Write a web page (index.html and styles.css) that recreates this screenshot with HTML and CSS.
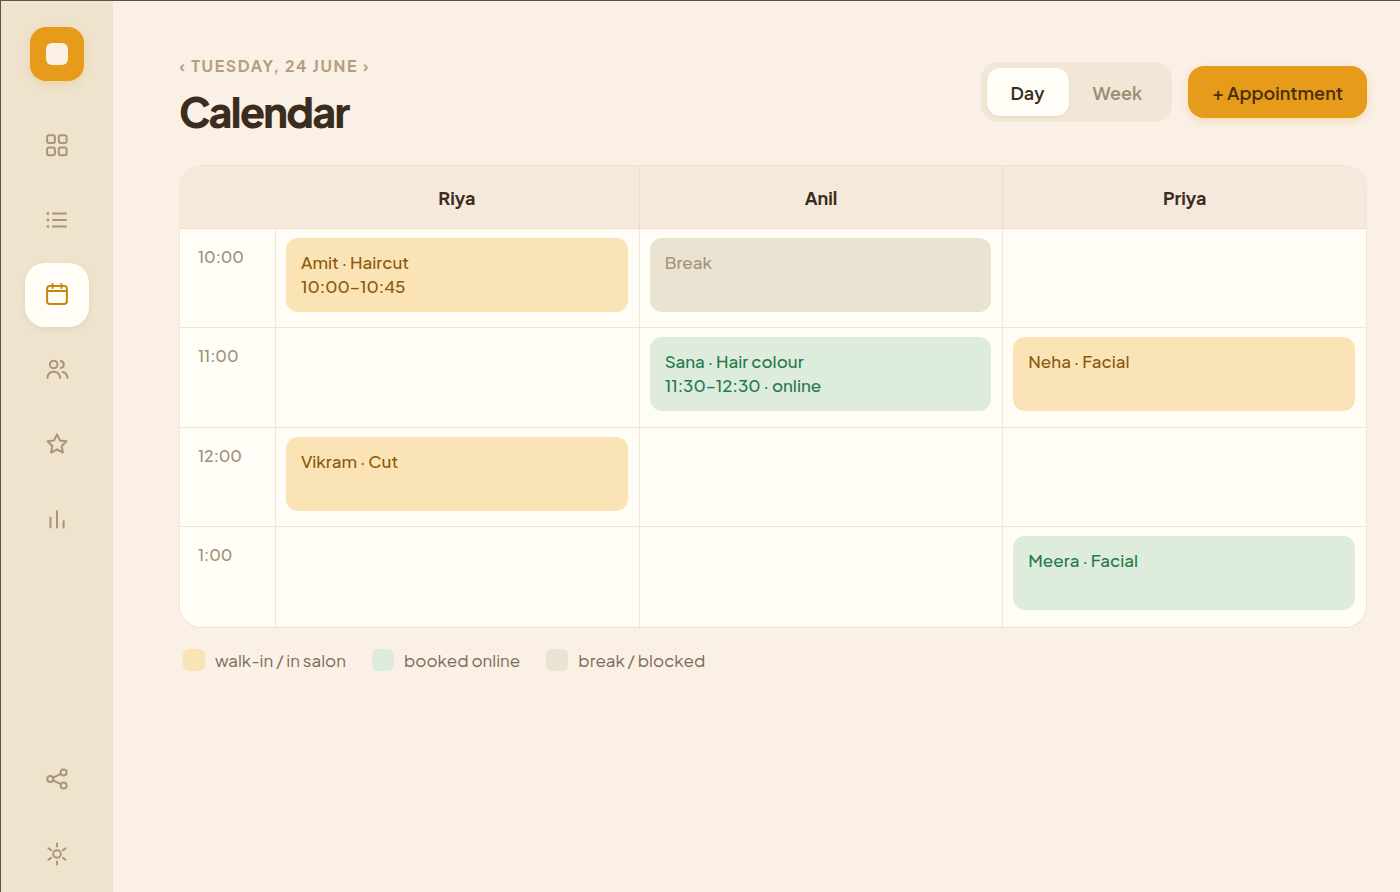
FILE: index.html
```html
<!DOCTYPE html>
<html lang="en">
<head>
<meta charset="utf-8">
<meta name="viewport" content="width=device-width, initial-scale=1">
<title>Calendar</title>
<link rel="stylesheet" href="styles.css">
</head>
<body>
<div class="app">
  <nav class="sidebar" aria-label="Main">
    <a class="logo" href="#" aria-label="Home"><span class="logo-mark"></span></a>
    <a class="nav-item" href="#" aria-label="Dashboard">
      <svg class="icon" viewBox="0 0 26 26"><rect x="3.1" y="3.2" width="7.8" height="7.8" rx="1.9"/><rect x="14.8" y="3.2" width="7.8" height="7.8" rx="1.9"/><rect x="3.1" y="15.4" width="7.8" height="7.8" rx="1.9"/><rect x="14.8" y="15.4" width="7.8" height="7.8" rx="1.9"/></svg>
    </a>
    <a class="nav-item" href="#" aria-label="List">
      <svg class="icon" viewBox="0 0 26 26"><path d="M9 6.5h13M9 13h13M9 19.6h13"/><g class="icon-dots"><circle cx="3.9" cy="6.5" r="1.4"/><circle cx="3.9" cy="13" r="1.4"/><circle cx="3.9" cy="19.6" r="1.4"/></g></svg>
    </a>
    <a class="nav-item nav-item-active" href="#" aria-label="Calendar" aria-current="page">
      <svg class="icon" viewBox="0 0 26 26"><rect x="3.1" y="4" width="19.8" height="18" rx="2.8"/><path d="M3.1 9h19.8M8.6 2.1v3.9M17.4 2.1v3.9"/></svg>
    </a>
    <a class="nav-item" href="#" aria-label="Clients">
      <svg class="icon" viewBox="0 0 26 26"><circle cx="9.7" cy="7.5" r="3.8"/><path d="M3.4 20.8c.3-3.8 2.9-6 6.3-6s6 2.2 6.3 6M16.8 4c1.8.4 3 1.7 3 3.5s-1.2 3.1-3 3.5M18.6 15.1c2.9.5 4.5 2.6 4.9 5.7"/></svg>
    </a>
    <a class="nav-item" href="#" aria-label="Reviews">
      <svg class="icon" viewBox="0 0 26 26"><path d="M13 2.4l2.9 6 6.6.9-4.8 4.7 1.2 6.6L13 17.5l-5.9 3.1 1.2-6.6-4.8-4.7 6.6-.9z"/></svg>
    </a>
    <a class="nav-item" href="#" aria-label="Reports">
      <svg class="icon" viewBox="0 0 26 26"><path d="M6.5 10.8v9.8M13 4.2v16.4M19.6 14.2v6.4"/></svg>
    </a>
    <a class="nav-item nav-item-end" href="#" aria-label="Share">
      <svg class="icon" viewBox="0 0 26 26"><circle cx="6.3" cy="13" r="3"/><circle cx="19.6" cy="6.4" r="3"/><circle cx="19.6" cy="19.6" r="3"/><path d="M9 11.7l7.9-3.9M9 14.3l7.9 3.9"/></svg>
    </a>
    <a class="nav-item" href="#" aria-label="Settings">
      <svg class="icon" viewBox="0 0 26 26"><circle cx="13" cy="13" r="3.8"/><path d="M13 2.6v3M13 20.4v3M4.5 7.4l2.6 1.7M18.9 16.9l2.6 1.7M4.5 18.6l2.6-1.7M18.9 9.1l2.6-1.7"/></svg>
    </a>
  </nav>

  <main class="main">
    <header class="page-header">
      <div>
        <p class="date">‹ Tuesday, 24 June ›</p>
        <h1 class="title">Calendar</h1>
      </div>
      <div class="actions">
        <div class="segmented" role="group" aria-label="View">
          <button class="segment segment-active" type="button" aria-pressed="true">Day</button>
          <button class="segment" type="button" aria-pressed="false">Week</button>
        </div>
        <button class="primary" type="button">+ Appointment</button>
      </div>
    </header>

    <div class="schedule-card">
      <table class="schedule">
        <thead>
          <tr><td class="time-col"></td><th scope="col">Riya</th><th scope="col">Anil</th><th scope="col">Priya</th></tr>
        </thead>
        <tbody>
          <tr>
            <th class="time" scope="row">10:00</th>
            <td><div class="event event-salon">Amit · Haircut<br>10:00–10:45</div></td>
            <td><div class="event event-break">Break</div></td>
            <td></td>
          </tr>
          <tr>
            <th class="time" scope="row">11:00</th>
            <td></td>
            <td><div class="event event-online">Sana · Hair colour<br>11:30–12:30 · online</div></td>
            <td><div class="event event-salon">Neha · Facial</div></td>
          </tr>
          <tr>
            <th class="time" scope="row">12:00</th>
            <td><div class="event event-salon">Vikram · Cut</div></td>
            <td></td>
            <td></td>
          </tr>
          <tr>
            <th class="time" scope="row">1:00</th>
            <td></td>
            <td></td>
            <td><div class="event event-online">Meera · Facial</div></td>
          </tr>
        </tbody>
      </table>
    </div>

    <ul class="legend">
      <li class="legend-item"><span class="swatch event-salon"></span>walk-in / in salon</li>
      <li class="legend-item"><span class="swatch event-online"></span>booked online</li>
      <li class="legend-item"><span class="swatch event-break"></span>break / blocked</li>
    </ul>
  </main>
</div>
</body>
</html>
```
FILE: styles.css
```css
*, *::before, *::after { box-sizing: border-box; }

body {
  margin: 0;
  background: #faf0e6;
  color: #3a2d20;
  font-family: "Plus Jakarta Sans", Inter, "Liberation Sans", sans-serif;
  font-size: 16px;
}

button { font: inherit; border: 0; cursor: pointer; }

.app {
  display: flex;
  min-height: 100vh;
  border-top: 1px solid #5f504b;
  border-left: 1px solid #5f504b;
}

.sidebar {
  display: flex;
  flex-direction: column;
  align-items: center;
  flex: none;
  gap: 11px;
  width: 112px;
  padding: 26px 1px 6px 0;
  background: #efe3cd;
}

.logo {
  display: grid;
  place-items: center;
  width: 54px;
  height: 54px;
  margin-bottom: 21px;
  border-radius: 16px;
  background: #e69b1a;
  box-shadow: 0 3px 8px rgba(230, 155, 26, 0.22);
}

.logo-mark {
  width: 22px;
  height: 22px;
  border-radius: 6px;
  background: #faf0e6;
}

.nav-item {
  display: grid;
  place-items: center;
  width: 64px;
  height: 64px;
  border-radius: 20px;
  color: #a6967a;
}

.nav-item-active {
  background: #fffdf6;
  color: #c6860f;
  box-shadow: 0 2px 6px rgba(90, 70, 30, 0.08);
}

.nav-item-end { margin-top: auto; }

.icon {
  width: 26px;
  height: 26px;
  fill: none;
  stroke: currentColor;
  stroke-width: 2;
  stroke-linecap: round;
  stroke-linejoin: round;
}

.icon-dots { fill: currentColor; stroke: none; }

.main {
  flex: 1;
  min-width: 0;
  padding: 53px 33px 32px 66px;
}

.page-header {
  display: flex;
  align-items: flex-start;
  justify-content: space-between;
  margin-bottom: 26px;
}

.date {
  margin: 0;
  color: #b3a079;
  font-size: 16px;
  font-weight: 700;
  line-height: 24px;
  letter-spacing: 0.1em;
  text-transform: uppercase;
}

.title {
  margin: 6px 0 0;
  font-size: 41px;
  font-weight: 800;
  line-height: 55px;
  letter-spacing: -0.04em;
}

.actions {
  display: flex;
  align-items: center;
  gap: 16px;
  margin-top: 8px;
}

.segmented {
  display: flex;
  padding: 5px;
  border: 1px solid #f0e5d3;
  border-radius: 18px;
  background: #f2e7d6;
}

.segment {
  height: 48px;
  padding: 0 24px;
  border-radius: 13px;
  background: none;
  color: #9c8c74;
  font-size: 18px;
  font-weight: 600;
}

.segment-active {
  background: #fffdf6;
  color: #3a2d20;
  box-shadow: 0 1px 3px rgba(90, 70, 30, 0.1);
}

.primary {
  height: 52px;
  padding: 0 24px;
  border-radius: 16px;
  background: #e69b1a;
  color: #4a300a;
  font-size: 18px;
  font-weight: 600;
  box-shadow: 0 3px 8px rgba(230, 155, 26, 0.25);
}

.schedule-card {
  overflow: hidden;
  border: 1px solid #efe5d3;
  border-bottom-color: #eae0c8;
  border-radius: 22px;
  background: #fffdf6;
}

.schedule {
  width: 100%;
  table-layout: fixed;
  border-collapse: separate;
  border-spacing: 0;
}

.schedule td, .schedule th {
  padding: 0;
  border-bottom: 1px solid #eee8da;
  vertical-align: top;
}

.schedule td + td, .schedule th + th, .schedule tbody th + td { border-left: 1px solid #eee8da; }

.schedule tbody tr:last-child > * { border-bottom: 0; }

.schedule tbody tr { height: 99px; }
.schedule tbody tr:nth-child(even) { height: 100px; }

.schedule thead th, .schedule thead td {
  height: 63px;
  background: #f4e9da;
  border-color: #eaded0;
  font-size: 18px;
  font-weight: 700;
  vertical-align: middle;
}

.time-col { width: 95px; }

.schedule .time {
  padding: 16px 18px 0;
  color: #9c907c;
  font-size: 16px;
  font-weight: 500;
  line-height: 24px;
  text-align: left;
}

.event {
  min-height: 74px;
  margin: 9px 11px 0 10px;
  padding: 12px 15px;
  border-radius: 12px;
  font-size: 17px;
  font-weight: 500;
  line-height: 24px;
}

.event-salon { background: #fae3b5; color: #8a5a0c; }
.event-online { background: #ddecdd; color: #257a4d; }
.event-break { background: #ebe3d2; color: #a3937a; }

.legend {
  display: flex;
  flex-wrap: wrap;
  gap: 12px 26px;
  margin: 21px 0 0;
  padding: 0 4px;
  color: #7a6b56;
  font-size: 17px;
  line-height: 22px;
  list-style: none;
}

.legend-item {
  display: flex;
  align-items: center;
  gap: 10px;
}

.swatch {
  width: 22px;
  height: 22px;
  border-radius: 6px;
}
```
